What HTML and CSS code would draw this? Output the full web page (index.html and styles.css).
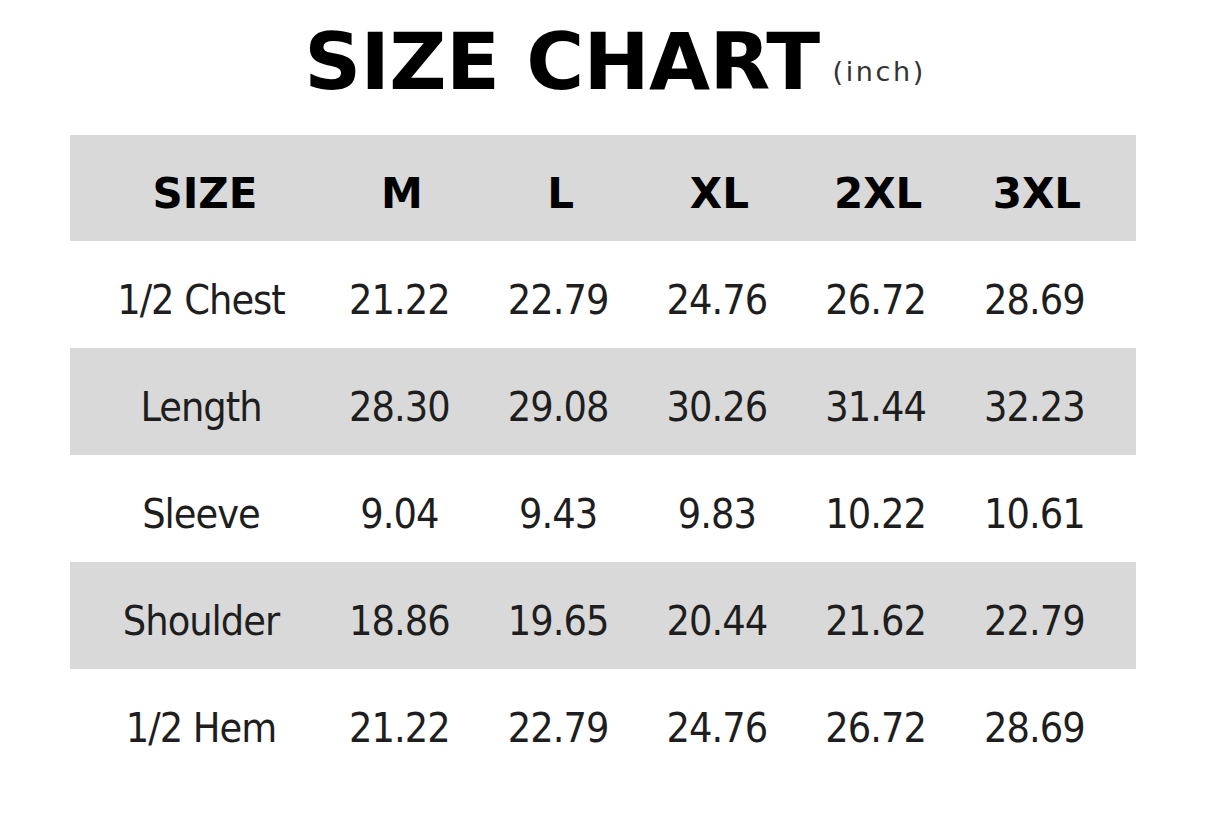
FILE: index.html
```html
<!DOCTYPE html>
<html>
<head>
<meta charset="utf-8">
<link rel="stylesheet" href="styles.css">
</head>
<body>
<div class="page">
  <h1 class="title"><span class="main">SIZE CHART</span><span class="unit">(inch)</span></h1>
  <div class="chart">
    <div class="row head"><div class="label">SIZE</div><div>M</div><div>L</div><div>XL</div><div>2XL</div><div>3XL</div></div>
    <div class="row"><div class="label">1/2 Chest</div><div>21.22</div><div>22.79</div><div>24.76</div><div>26.72</div><div>28.69</div></div>
    <div class="row alt"><div class="label">Length</div><div>28.30</div><div>29.08</div><div>30.26</div><div>31.44</div><div>32.23</div></div>
    <div class="row"><div class="label">Sleeve</div><div>9.04</div><div>9.43</div><div>9.83</div><div>10.22</div><div>10.61</div></div>
    <div class="row alt"><div class="label">Shoulder</div><div>18.86</div><div>19.65</div><div>20.44</div><div>21.62</div><div>22.79</div></div>
    <div class="row"><div class="label">1/2 Hem</div><div>21.22</div><div>22.79</div><div>24.76</div><div>26.72</div><div>28.69</div></div>
  </div>
</div>
</body>
</html>
```
FILE: styles.css
```css
html, body {
  margin: 0;
  padding: 0;
  background: #ffffff;
}
.page {
  width: 1206px;
  height: 817px;
  font-family: "DejaVu Sans Condensed", "DejaVu Sans", sans-serif;
  color: #1e1e1e;
}
.title {
  margin: 0;
  height: 135px;
  display: flex;
  justify-content: center;
  align-items: baseline;
  padding-left: 24px;
  box-sizing: border-box;
  padding-top: 17px;
}
.title .main {
  font-family: "DejaVu Sans", sans-serif;
  font-weight: bold;
  font-size: 79px;
  line-height: 90px;
  color: #000;
  letter-spacing: -0.6px;
}
.title .unit {
  font-family: "DejaVu Sans", sans-serif;
  font-weight: normal;
  font-size: 27px;
  color: #333;
  margin-left: 13px;
  position: relative;
  top: -8px;
  letter-spacing: 2.6px;
}
.chart {
  margin-left: 70px;
  width: 1066px;
}
.row {
  display: grid;
  grid-template-columns: 250px repeat(5, 158.75px);
  height: 107px;
  align-items: center;
  font-size: 41px;
  letter-spacing: -1px;
  color: #1e1e1e;
}
.row > div {
  text-align: center;
  padding-top: 10px;
}
.row .label {
  padding-left: 12px;
}
.head, .alt {
  background: #d9d9d9;
}
.head {
  height: 106px;
  font-family: "DejaVu Sans", sans-serif;
  font-weight: bold;
  color: #000;
  font-size: 42px;
  letter-spacing: 0;
}
.head > div {
  padding-left: 5px;
}
.head .label {
  padding-left: 20px;
}
```
